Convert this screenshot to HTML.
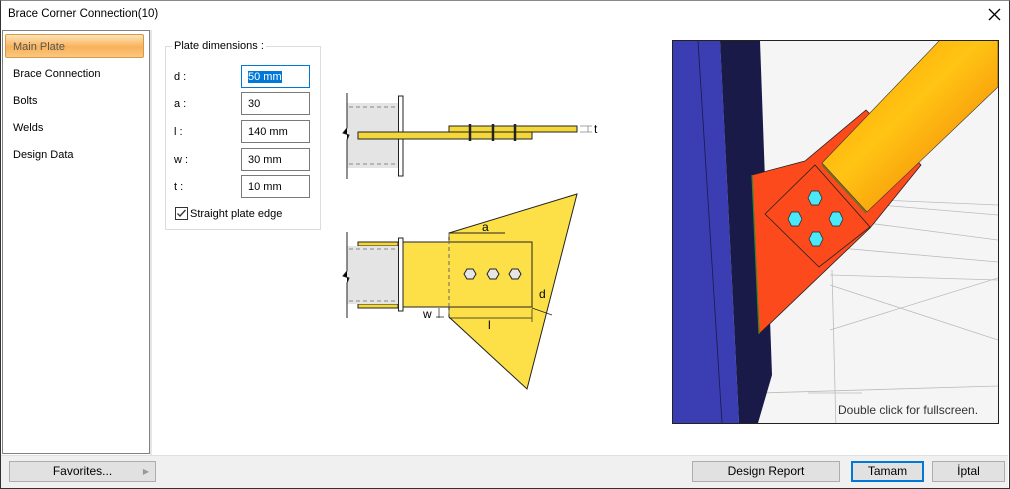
<!DOCTYPE html>
<html><head><meta charset="utf-8"><style>
*{margin:0;padding:0;box-sizing:border-box}
body{width:1010px;height:489px;background:#fff;font-family:"Liberation Sans",sans-serif;font-size:11px;color:#000;position:relative;overflow:hidden}
.abs{position:absolute}
.win{left:0;top:0;width:1010px;height:489px;border:1px solid #333;border-top:1px solid #888}
.title{left:8px;top:8px;font-size:11.5px}
.side{left:2px;top:30px;width:148px;height:424px;border:1px solid #828282;background:#fff}
.sel{left:5px;top:34px;width:139px;height:24px;border:1px solid #d49a4a;border-radius:2px;background:linear-gradient(#fde3b8,#f9b25a 55%,#fbc77f);color:#555;padding:6px 0 0 7px}
.item{left:13px}
.sep{left:150px;top:30px;width:2px;height:425px;background:#e6e6e6}
.bbar{left:1px;top:455px;width:1007px;height:33px;background:#f0f0f0;border-top:1px solid #e0e0e0}
.btn{height:21px;background:#e1e1e1;border:1px solid #adadad;text-align:center;line-height:19px;font-size:12px}
.fs{left:165px;top:46px;width:156px;height:184px;border:1px solid #dcdcdc}
.leg{left:172px;top:40px;background:#fff;padding:0 2px}
.lbl{left:174px}
.inp{left:241px;width:69px;height:23px;border:1px solid #7a7a7a;padding:5px 0 0 6px}
</style></head><body>
<div class="abs win"></div>
<div class="abs title">Brace Corner Connection(10)</div>
<svg class="abs" style="left:988px;top:8px" width="13" height="13"><path d="M1 1L12 12M12 1L1 12" stroke="#000" stroke-width="1.3"/></svg>
<div class="abs side"></div>
<div class="abs sep"></div>
<div class="abs sel">Main Plate</div>
<div class="abs item" style="top:68px">Brace Connection</div>
<div class="abs item" style="top:95px">Bolts</div>
<div class="abs item" style="top:122px">Welds</div>
<div class="abs item" style="top:149px">Design Data</div>

<div class="abs fs"></div>
<div class="abs leg">Plate dimensions :</div>
<div class="abs lbl" style="top:71px">d :</div>
<div class="abs lbl" style="top:98px">a :</div>
<div class="abs lbl" style="top:126px">l :</div>
<div class="abs lbl" style="top:154px">w :</div>
<div class="abs lbl" style="top:181px">t :</div>
<div class="abs inp" style="top:65px;border-color:#0078d7"><span style="background:#0078d7;color:#fff">50 mm</span></div>
<div class="abs inp" style="top:92px">30</div>
<div class="abs inp" style="top:120px">140 mm</div>
<div class="abs inp" style="top:148px">30 mm</div>
<div class="abs inp" style="top:175px">10 mm</div>
<svg class="abs" style="left:175px;top:207px" width="14" height="14"><rect x="0.5" y="0.5" width="12" height="12" fill="#fff" stroke="#333"/><path d="M2.5 6.5L5 9L10.5 3" stroke="#333" stroke-width="1.3" fill="none"/></svg>
<div class="abs" style="left:190px;top:208px">Straight plate edge</div>

<svg class="abs" style="left:0;top:0" width="1010" height="489">
 <g stroke="#222" stroke-width="1">
  <rect x="347" y="103" width="51" height="65" fill="#e4e4e4" stroke="none"/>
  <path d="M349 107H396M349 164H396" stroke="#888" stroke-dasharray="4 3"/>
  <path d="M347 93V128L343 133L349 135L347 140V179"/>
  <rect x="398.5" y="96" width="4.5" height="80" fill="#fff"/>
  <rect x="358" y="132" width="174" height="7" fill="#f4d83a"/>
  <rect x="449" y="126" width="128" height="6" fill="#f4d83a"/>
  <path d="M470 124V141M493 124V141M515 124V141" stroke-width="2.5"/>
  <path d="M580 126h12M580 132h12M588 126v6" stroke="#888" stroke-width=".8"/>
 </g>
 <text x="594" y="133" font-size="12" font-family="Liberation Sans">t</text>
 <g stroke="#222" stroke-width="1">
  <polygon points="449,233 577,194 527,389 449,317" fill="#fde047"/>
  <rect x="358" y="242" width="40" height="4" fill="#f4d83a"/>
  <rect x="358" y="304" width="40" height="4" fill="#f4d83a"/>
  <rect x="347" y="246" width="51" height="58" fill="#e4e4e4" stroke="none"/>
  <path d="M349 249H396M349 301H396" stroke="#888" stroke-dasharray="4 3"/>
  <path d="M347 232V271L343 276L349 278L347 283V318"/>
  <rect x="403" y="242" width="129" height="65" fill="#fde047"/>
  <rect x="398.5" y="238" width="4.5" height="73" fill="#fff"/>
  <path d="M449 233V317" stroke-dasharray="4 3" stroke="#666"/>
  <path d="M449 233H505"/>
  <path d="M449 318H532M532 309V322M439 308v10M436 307h8M436 317h8M532 308L552 315" stroke-width=".7"/>
  <g fill="#e6e6e6" stroke="#222">
   <polygon points="464,274 467,269 473,269 476,274 473,279 467,279"/>
   <polygon points="487,274 490,269 496,269 499,274 496,279 490,279"/>
   <polygon points="509,274 512,269 518,269 521,274 518,279 512,279"/>
  </g>
 </g>
 <g font-size="12" font-family="Liberation Sans">
  <text x="482" y="231">a</text><text x="539" y="298">d</text><text x="488" y="329">l</text><text x="423" y="318">w</text>
 </g>
 <rect x="672.5" y="40.5" width="326" height="383" fill="#f5f5f5" stroke="#222"/>
 <clipPath id="c"><rect x="673" y="41" width="325" height="382"/></clipPath>
 <g clip-path="url(#c)">
  <g stroke="#bbb" stroke-width=".8" fill="none">
   <path d="M880 200L998 205M880 205L998 215M860 222L998 240M840 248L998 262M830 275L998 280M830 330L998 278M830 285L998 340M832 270L836 430M760 393L998 386M808 393L862 393"/>
  </g>
  <polygon points="673,41 720,41 739,423 673,423" fill="#3b3db2"/>
  <path d="M698 41L722 423" stroke="#1a1a4a" stroke-width=".8"/>
  <polygon points="720,41 760,41 772,375 758,423 739,423" fill="#1a1a48"/>
  <polygon points="752,175 805,161 866,110 921,165 870,228 759,334" fill="#fc4a1c" stroke="#222" stroke-width=".8"/>
  <path d="M752 175L759 334" stroke="#2a8a2a" stroke-width="1.2"/>
  <polygon points="765,214 815,165 870,227 819,267" fill="#fc4a1c" stroke="#222" stroke-width=".8"/>
  <defs><linearGradient id="g" x1="0" y1="0" x2="1" y2="1"><stop offset="0" stop-color="#ffa000"/><stop offset=".45" stop-color="#ffc414"/><stop offset="1" stop-color="#f07000"/></linearGradient></defs>
  <polygon points="940,40 998,40 998,87 867,212 822,163" fill="url(#g)" stroke="#333" stroke-width=".6"/>
  <path d="M822 165L866 213" stroke="#2a8a2a" stroke-width="1"/>
  <g fill="#4ae8f8" stroke="#222" stroke-width=".7">
   <polygon points="808,198 811.5,191 818.5,191 822,198 818.5,205 811.5,205"/>
   <polygon points="788,219 791.5,212 798.5,212 802,219 798.5,226 791.5,226"/>
   <polygon points="829,219 832.5,212 839.5,212 843,219 839.5,226 832.5,226"/>
   <polygon points="809,239 812.5,232 819.5,232 823,239 819.5,246 812.5,246"/>
  </g>
 </g>
 <text x="838" y="414" font-size="12" font-family="Liberation Sans" fill="#333">Double click for fullscreen.</text>
</svg>

<div class="abs bbar"></div>
<div class="abs btn" style="left:9px;top:461px;width:147px">Favorites...<span style="position:absolute;right:6px;top:0;color:#999;font-size:8px">&#9654;</span></div>
<div class="abs btn" style="left:692px;top:461px;width:148px">Design Report</div>
<div class="abs btn" style="left:851px;top:461px;width:73px;border:2px solid #0078d7;line-height:17px">Tamam</div>
<div class="abs btn" style="left:932px;top:461px;width:73px">İptal</div>
</body></html>
